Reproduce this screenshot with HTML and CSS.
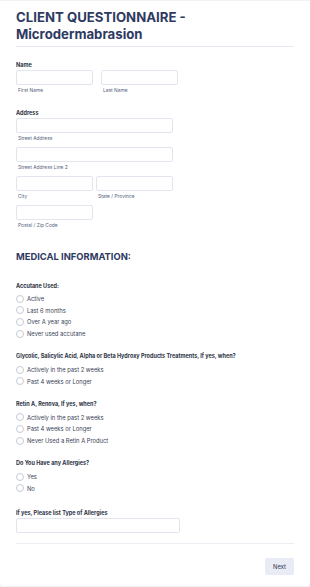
FILE: index.html
```html
<!DOCTYPE html>
<html lang="en">
<head>
  <meta charset="UTF-8" />
  <meta name="viewport" content="width=device-width, initial-scale=1.0" />
  <title>CLIENT QUESTIONNAIRE - Microdermabrasion</title>
  <link rel="stylesheet" href="styles.css">
</head>
<body>
  <div class="card">
    <div class="form-header">
      <h1>CLIENT QUESTIONNAIRE - Microdermabrasion</h1>
    </div>

    <div class="field">
      <div class="label">Name</div>
      <div class="row">
        <div class="col half">
          <input type="text" />
          <span class="sub">First Name</span>
        </div>
        <div class="col half">
          <input type="text" />
          <span class="sub">Last Name</span>
        </div>
      </div>
    </div>

    <div class="field">
      <div class="label">Address</div>
      <div class="row">
        <div class="col full">
          <input type="text" />
          <span class="sub">Street Address</span>
        </div>
      </div>
      <div class="row">
        <div class="col full">
          <input type="text" />
          <span class="sub">Street Address Line 2</span>
        </div>
      </div>
      <div class="row">
        <div class="col city">
          <input type="text" />
          <span class="sub">City</span>
        </div>
        <div class="col city">
          <input type="text" />
          <span class="sub">State / Province</span>
        </div>
      </div>
      <div class="row">
        <div class="col city">
          <input type="text" />
          <span class="sub">Postal / Zip Code</span>
        </div>
      </div>
    </div>

    <h2 class="section">MEDICAL INFORMATION:</h2>

    <div class="question">
      <div class="label">Accutane Used:</div>
      <label class="option"><span class="radio"></span>Active</label>
      <label class="option"><span class="radio"></span>Last 6 months</label>
      <label class="option"><span class="radio"></span>Over A year ago</label>
      <label class="option"><span class="radio"></span>Never used accutane</label>
    </div>

    <div class="question">
      <div class="label">Glycolic, Salicylic Acid, Alpha or Beta Hydroxy Products Treatments, If yes, when?</div>
      <label class="option"><span class="radio"></span>Actively in the past 2 weeks</label>
      <label class="option"><span class="radio"></span>Past 4 weeks or Longer</label>
    </div>

    <div class="question">
      <div class="label">Retin A, Renova, If yes, when?</div>
      <label class="option"><span class="radio"></span>Actively in the past 2 weeks</label>
      <label class="option"><span class="radio"></span>Past 4 weeks or Longer</label>
      <label class="option"><span class="radio"></span>Never Used a Retin A Product</label>
    </div>

    <div class="question">
      <div class="label">Do You Have any Allergies?</div>
      <label class="option"><span class="radio"></span>Yes</label>
      <label class="option"><span class="radio"></span>No</label>
    </div>

    <div class="question allergies">
      <div class="label">If yes, Please list Type of Allergies</div>
      <input type="text" class="wide" />
    </div>

    <div class="footer">
      <button>Next</button>
    </div>
  </div>
</body>
</html>
```

FILE: styles.css
```css
body {
  font-family: 'Inter', 'Roboto', sans-serif;
  margin: 0;
  padding: 0;
  background: #f3f3f6;
  color: #2c3345;
}
.card {
  background: #fff;
  margin-top: 1px;
  padding: 8px 16px 10px;
  border-radius: 0 0 4px 4px;
  height: 567px;
}
.form-header {
  border-bottom: 1px solid #e6e8ef;
  padding-bottom: 4px;
}
h1 {
  margin: 0;
  font-size: 13.2px;
  line-height: 16.5px;
  font-weight: 700;
  color: #2e3a62;
  width: 230px;
}
.field {
  margin-top: 14px;
}
.label {
  font-size: 5.5px;
  line-height: 9px;
  font-weight: 700;
  color: #2c3345;
}
.row {
  display: flex;
  gap: 8px;
  margin-bottom: 4px;
}
.col {
  display: flex;
  flex-direction: column;
}
.half { width: 77px; }
.full { width: 157px; }
.city { width: 77px; }
.row .city + .city { margin-left: -5px; }
input {
  display: block;
  box-sizing: border-box;
  height: 15px;
  width: 100%;
  margin: 0;
  border: 1px solid #e3e5ee;
  border-radius: 2px;
  background: #fff;
  padding: 0 3px;
}
.sub {
  font-size: 4.9px;
  line-height: 10px;
  color: #57647e;
  padding-left: 2px;
}
.section {
  margin: 20px 0 0;
  font-size: 9.4px;
  line-height: 13px;
  font-weight: 700;
  color: #2e3a62;
}
.question {
  margin-top: 18.5px;
}
.question + .question {
  margin-top: 13px;
}
.question .label {
  margin-bottom: 2.5px;
}
.option {
  display: flex;
  align-items: center;
  height: 11.6px;
  font-size: 5.8px;
  color: #3a4356;
}
.radio {
  box-sizing: border-box;
  width: 8px;
  height: 8px;
  border: 1px solid #c3cad8;
  border-radius: 50%;
  margin-right: 3px;
}
.question.allergies {
  margin-top: 14.5px;
}
.allergies .label {
  margin-bottom: 0.5px;
}
input.wide {
  width: 164px;
}
.footer {
  margin-top: 10px;
  border-top: 1px solid #eceef4;
  padding-top: 14px;
  display: flex;
  justify-content: flex-end;
}
button {
  font-family: 'Inter', 'Roboto', sans-serif;
  font-size: 5.8px;
  color: #2c3345;
  background: #e9ebf5;
  border: none;
  border-radius: 2px;
  width: 29px;
  height: 17px;
  padding: 0;
}
```
